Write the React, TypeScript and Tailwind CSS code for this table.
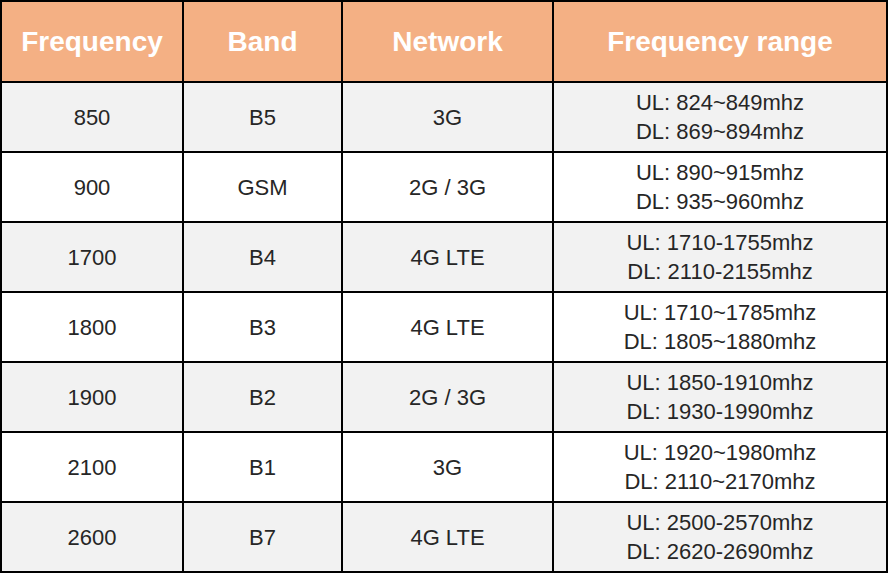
const rows = [
  { freq: "850", band: "B5", net: "3G", ul: "UL: 824~849mhz", dl: "DL: 869~894mhz" },
  { freq: "900", band: "GSM", net: "2G / 3G", ul: "UL: 890~915mhz", dl: "DL: 935~960mhz" },
  { freq: "1700", band: "B4", net: "4G LTE", ul: "UL: 1710-1755mhz", dl: "DL: 2110-2155mhz" },
  { freq: "1800", band: "B3", net: "4G LTE", ul: "UL: 1710~1785mhz", dl: "DL: 1805~1880mhz" },
  { freq: "1900", band: "B2", net: "2G / 3G", ul: "UL: 1850-1910mhz", dl: "DL: 1930-1990mhz" },
  { freq: "2100", band: "B1", net: "3G", ul: "UL: 1920~1980mhz", dl: "DL: 2110~2170mhz" },
  { freq: "2600", band: "B7", net: "4G LTE", ul: "UL: 2500-2570mhz", dl: "DL: 2620-2690mhz" },
];

export default function App() {
  return (
    <div className="w-[888px] h-[573px] bg-white [font-family:'Liberation_Sans',Arial,sans-serif] overflow-hidden">
      <table className="w-[888px] border-collapse table-fixed border-2 border-black [font-family:'Liberation_Sans',Arial,sans-serif]">
        <colgroup>
          <col className="w-[182px]" />
          <col className="w-[159px]" />
          <col className="w-[211px]" />
          <col />
        </colgroup>
        <thead>
          <tr className="h-[81px] bg-[#f4b084] text-white text-[28px] font-bold">
            <th className="border-2 border-black">Frequency</th>
            <th className="border-2 border-black">Band</th>
            <th className="border-2 border-black">Network</th>
            <th className="border-2 border-black">Frequency range</th>
          </tr>
        </thead>
        <tbody className="text-[22px] text-[#262626]">
          {rows.map((r, i) => (
            <tr key={i} className={`h-[70px] ${i % 2 === 0 ? "bg-[#f2f2f2]" : "bg-white"}`}>
              <td className="border-2 border-black text-center">{r.freq}</td>
              <td className="border-2 border-black text-center">{r.band}</td>
              <td className="border-2 border-black text-center">{r.net}</td>
              <td className="border-2 border-black text-center leading-[29px]">
                <div>{r.ul}</div>
                <div>{r.dl}</div>
              </td>
            </tr>
          ))}
        </tbody>
      </table>
    </div>
  );
}
